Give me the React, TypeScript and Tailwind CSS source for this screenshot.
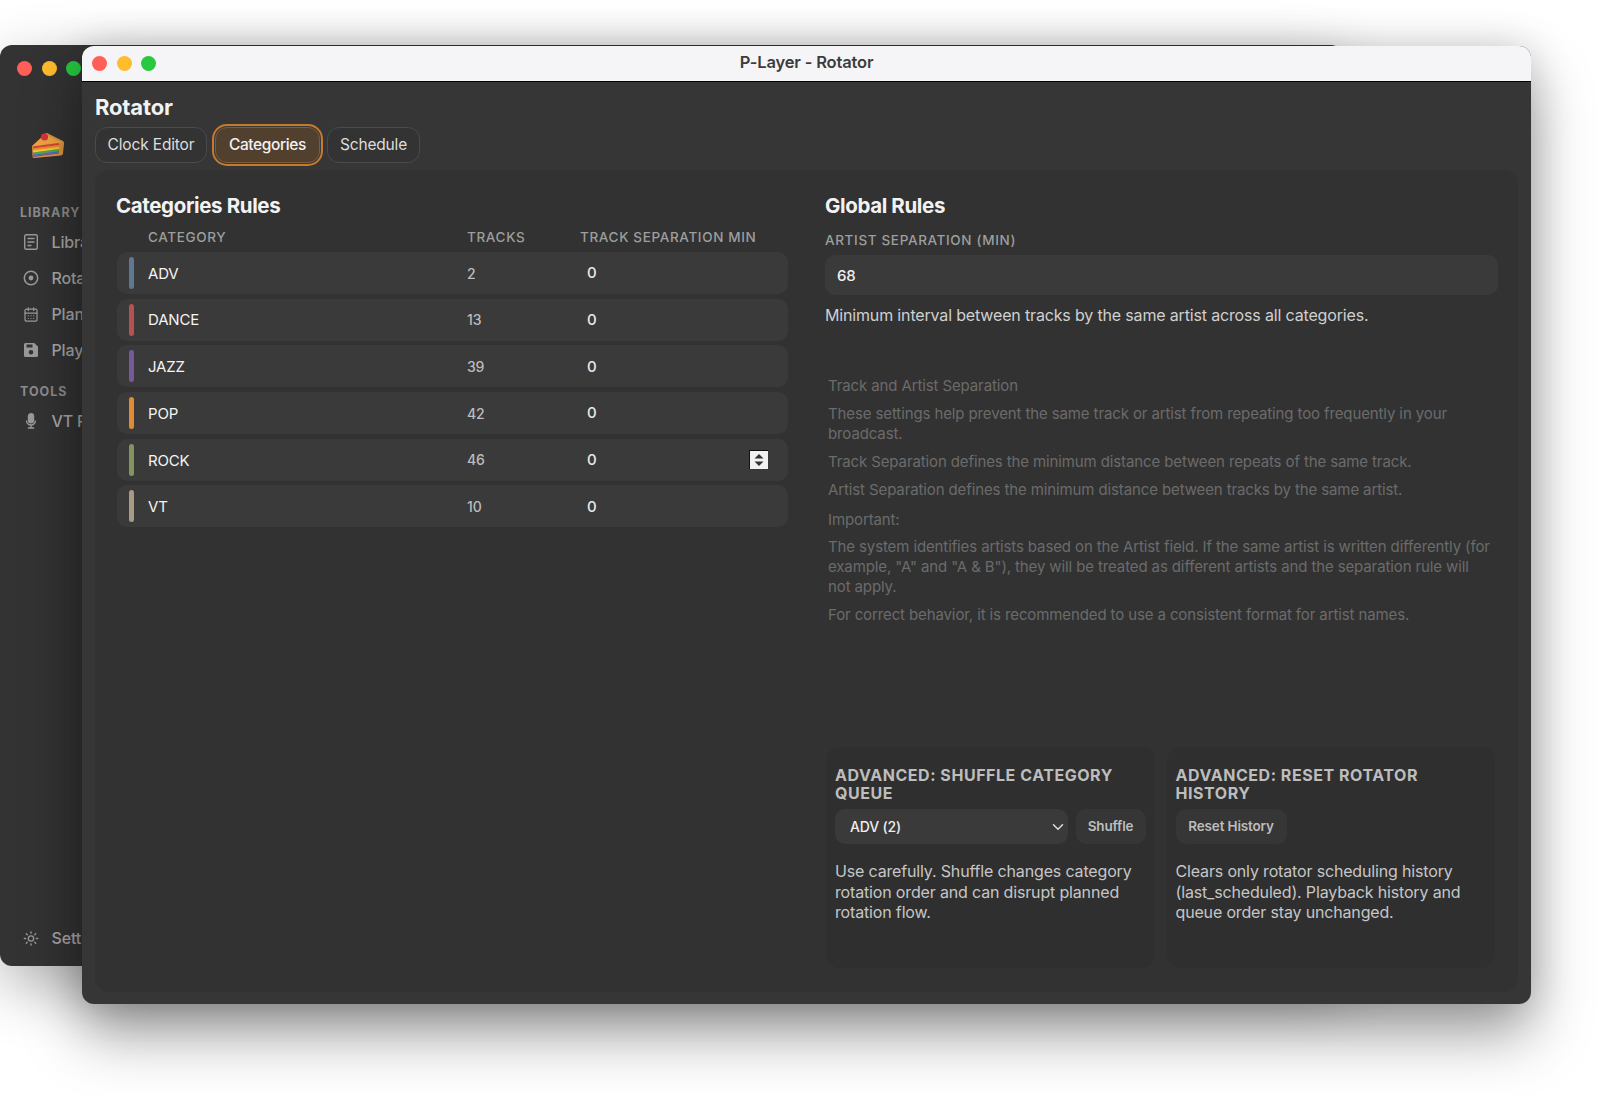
import { CalendarDays, ChevronDown, Sun } from 'lucide-react';

const categories = [
  { name: 'ADV', tracks: 2, color: 'bg-[#5d7890]' },
  { name: 'DANCE', tracks: 13, color: 'bg-[#b5524f]' },
  { name: 'JAZZ', tracks: 39, color: 'bg-[#745a9b]' },
  { name: 'POP', tracks: 42, color: 'bg-[#e08a34]' },
  { name: 'ROCK', tracks: 46, color: 'bg-[#84945f]', stepper: true },
  { name: 'VT', tracks: 10, color: 'bg-[#a89a83]' },
];

function Lights({ className }: { className: string }) {
  return (
    <div className={`flex gap-[9.5px] ${className}`}>
      <span className="h-[15px] w-[15px] rounded-full bg-[#ff5f57]" />
      <span className="h-[15px] w-[15px] rounded-full bg-[#febc2e]" />
      <span className="h-[15px] w-[15px] rounded-full bg-[#28c840]" />
    </div>
  );
}

function Cake() {
  return (
    <svg width="34" height="30" viewBox="0 0 34 30" className="ml-[31px] mt-[53px]">
      <path d="M1 17 L14 5 Q15 3.5 17 4.5 L32 12 Q33.5 13 33 15 L32 24 Q32 26 30 26.5 L3 29 Q1.5 29 1.5 27.5 Z" fill="#dd9340" />
      <path d="M1.5 17 L14 5.5 L31 13.5 Z" fill="#f0a545" />
      <path d="M2 17.5 L28 14 L28 16 L2 19.5 Z" fill="#d8433a" />
      <path d="M2 19.5 L28 16 L28 18 L2 21.5 Z" fill="#ef8f2e" />
      <path d="M2 21.5 L28 18 L28 20 L2 23.5 Z" fill="#f2cf3c" />
      <path d="M2 23.5 L28 20 L28 22 L2 25.5 Z" fill="#58a845" />
      <path d="M2 25.5 L28 22 L28 23.5 L2 27 Z" fill="#3f74c0" />
      <path d="M2 27 L28 23.5 L28 24.5 L2 28 Z" fill="#7b4aa6" />
      <circle cx="13.5" cy="8" r="3.6" fill="#d9333a" />
    </svg>
  );
}

function DocIcon() {
  return (
    <svg width="16" height="16" viewBox="0 0 16 16" fill="none" stroke="currentColor" strokeWidth="1.4">
      <rect x="1.7" y="0.7" width="12.6" height="14.6" rx="1.6" />
      <path d="M4.5 4.5h7M4.5 8h7M4.5 11.5h4" />
    </svg>
  );
}

function TargetIcon() {
  return (
    <svg width="16" height="16" viewBox="0 0 16 16" fill="none" stroke="currentColor" strokeWidth="1.5">
      <circle cx="8" cy="8" r="6.7" />
      <circle cx="8" cy="8" r="2.4" fill="currentColor" stroke="none" />
    </svg>
  );
}

function SaveIcon() {
  return (
    <svg width="16" height="16" viewBox="0 0 16 16" fill="currentColor">
      <path fillRule="evenodd" d="M2.5 1h8.7L15 4.6v8.9A1.5 1.5 0 0 1 13.5 15h-11A1.5 1.5 0 0 1 1 13.500v-11A1.5 1.5 0 0 1 2.500 1ZM3.500 2.500v3h6v-3ZM8 8a2.300 2.300 0 1 0 0 4.600A2.300 2.300 0 0 0 8 8Z" />
    </svg>
  );
}

function MicIcon() {
  return (
    <svg width="16" height="16" viewBox="0 0 16 16" fill="none" stroke="currentColor" strokeWidth="1.4">
      <rect x="5.500" y="0.800" width="5" height="9" rx="2.500" fill="currentColor" />
      <path d="M3.500 7.500a4.500 4.500 0 0 0 9 0M8 12v2.500M4.800 15h6.400" />
    </svg>
  );
}

function NavRow({ icon, label, className }: { icon: React.ReactNode; label: string; className?: string }) {
  return (
    <div className={`flex h-[36px] items-center gap-[12.5px] pl-[23px] text-[16px] font-medium text-[#a8a8a8] ${className ?? ''}`}>
      <span className="flex w-[16px] justify-center text-[#9a9a9a]">{icon}</span>
      <span className="whitespace-nowrap">{label}</span>
    </div>
  );
}

function Stepper() {
  return (
    <div className="ml-auto mr-[20px] flex h-[19px] w-[19px] items-center justify-center border-l border-t border-[#111] bg-[#f2f2f2]">
      <svg width="12" height="14" viewBox="0 0 12 14" fill="#333">
        <path d="M6 1 L10.500 5.500 H1.500 Z" />
        <path d="M6 13 L1.500 8.500 H10.500 Z" />
      </svg>
    </div>
  );
}

function AdvancedCard({ title, children, text }: { title: React.ReactNode; children: React.ReactNode; text: string }) {
  return (
    <div className="h-[221px] rounded-[14px] bg-[#2f2f2f] px-[9px] pt-[19px]">
      <h3 className="text-[16px] font-bold leading-[18px] tracking-[0.034em] text-[#bdbdbd]">{title}</h3>
      <div className="mt-[7px] flex gap-2">{children}</div>
      <p className="mt-[17px] text-[16px] leading-[20.500px] text-[#c6c6c6]">{text}</p>
    </div>
  );
}

export default function App() {
  return (
    <div className="relative h-[1095px] w-[1600px] overflow-hidden bg-white font-['Inter','Liberation_Sans',sans-serif] tracking-[-0.01em]">
      {/* window behind */}
      <div className="absolute left-0 top-[45px] h-[921px] w-[1343px] rounded-[12px] bg-[#333333] shadow-[0_20px_60px_rgba(0,0,0,0.3)]">
        <Lights className="pl-[17px] pt-[16px]" />
        <Cake />
        <div className="mt-[46px] pl-[20px] text-[12.500px] font-bold leading-[16px] tracking-[0.08em] text-[#8c8c8c]">LIBRARY</div>
        <NavRow className="mt-[3px]" icon={<DocIcon />} label="Library" />
        <NavRow icon={<TargetIcon />} label="Rotator" />
        <NavRow icon={<CalendarDays size={17} strokeWidth={1.8} />} label="Planner" />
        <NavRow icon={<SaveIcon />} label="Playlist" />
        <div className="mt-[16px] pl-[20px] text-[12.500px] font-bold leading-[16px] tracking-[0.08em] text-[#8c8c8c]">TOOLS</div>
        <NavRow className="mt-[3px]" icon={<MicIcon />} label="VT Recorder" />
        <NavRow className="mt-[481px]" icon={<Sun size={17} />} label="Settings" />
      </div>

      {/* front window */}
      <div className="absolute left-[82px] top-[46px] flex h-[958px] w-[1449px] flex-col overflow-hidden rounded-[12px] bg-[#363636] shadow-[0_30px_60px_rgba(0,0,0,0.38),0_0_40px_rgba(0,0,0,0.15)]">
        <div className="relative flex h-[36px] flex-none items-center justify-center border-b border-black bg-[#f5f5f7] pb-[2px]">
          <Lights className="absolute left-[10px] top-[10px]" />
          <span className="text-[16.500px] font-semibold text-[#3c3c3c]">P-Layer - Rotator</span>
        </div>

        <div className="flex min-h-0 flex-1 flex-col pl-[13px] pr-[13px] pb-[12px]">
          <h1 className="mt-[11px] text-[22px] font-bold leading-[28px] text-[#f2f2f2]">Rotator</h1>
          <div className="mt-[6px] flex">
            <button className="h-[36px] w-[112px] rounded-[12px] border border-[#4b4b4b] bg-[#333333] text-[15.5px] text-[#dddddd]">Clock Editor</button>
            <button className="ml-[8px] h-[36px] w-[105px] rounded-[12px] border border-[#7a5c3f] bg-[#52402f] text-[15.5px] font-medium tracking-[-0.025em] text-[#f2f2f2] shadow-[0_0_0_1px_#3a3a3a,0_0_0_3px_#c67a2b]">Categories</button>
            <button className="ml-[7px] h-[36px] w-[93px] rounded-[12px] border border-[#4b4b4b] bg-[#333333] text-[15.5px] text-[#dddddd]">Schedule</button>
          </div>

          <div className="mt-[7px] grid min-h-0 flex-1 grid-cols-[671px_673px] gap-x-[37px] rounded-[14px] bg-[#323232] pl-[22px] pr-[20px] pb-[24px] pt-[22px]">
            {/* categories */}
            <div>
              <h2 className="-ml-px text-[20.5px] font-bold leading-[28px] tracking-[-0.018em] text-[#f2f2f2]">Categories Rules</h2>
              <div className="mt-[7px] grid h-[20px] grid-cols-[350px_113px_1fr] items-center pl-[31px] text-[13.500px] font-medium tracking-[0.048em] text-[#9e9e9e]">
                <span className="w-[319px]">CATEGORY</span>
                <span className="-ml-[31px]">TRACKS</span>
                <span className="-ml-[31px]">TRACK SEPARATION MIN</span>
              </div>
              <div className="mt-[5px] flex flex-col gap-[4.700px]">
                {categories.map((c) => (
                  <div key={c.name} className="grid h-[42px] grid-cols-[350px_113px_1fr] items-center rounded-[10px] bg-[#3a3a3a]">
                    <div className="flex items-center pl-[12px]">
                      <span className={`h-[32px] w-[5px] rounded-full ${c.color}`} />
                      <span className="ml-[14px] pt-[2px] text-[15px] text-[#f4f4f4]">{c.name}</span>
                    </div>
                    <span className="text-[14px] font-medium text-[#bcbcbc]">{c.tracks}</span>
                    <div className="flex items-center pl-[7px]">
                      <span className="pt-[1px] text-[15px] font-medium text-[#e8e8e8]">0</span>
                      {c.stepper && <Stepper />}
                    </div>
                  </div>
                ))}
              </div>
            </div>

            {/* global */}
            <div className="flex flex-col">
              <h2 className="text-[20.5px] font-bold leading-[28px] tracking-[-0.018em] text-[#f2f2f2]">Global Rules</h2>
              <label className="mt-[10px] text-[13.500px] font-medium leading-[20px] tracking-[0.048em] text-[#9e9e9e]">ARTIST SEPARATION (MIN)</label>
              <input
                readOnly
                value="68"
                className="mt-[5px] h-[40px] w-full flex-none rounded-[10px] bg-[#3a3a3a] px-[12px] text-[15px] font-medium text-[#f0f0f0] outline-none"
              />
              <p className="mt-[10px] text-[16px] leading-[21px] text-[#d0d0d0]">Minimum interval between tracks by the same artist across all categories.</p>

              <div className="mt-[50px] pl-[3px] pr-[5px] text-[15px] leading-[20px] tracking-[-0.0077em] text-[#6b6b6b]">
                <p>Track and Artist Separation</p>
                <p className="mt-[8px]">These settings help prevent the same track or artist from repeating too frequently in your broadcast.</p>
                <p className="mt-[8px]">Track Separation defines the minimum distance between repeats of the same track.</p>
                <p className="mt-[8px]">Artist Separation defines the minimum distance between tracks by the same artist.</p>
                <p className="mt-[10px]">Important:</p>
                <p className="mt-[7px]">The system identifies artists based on the Artist field. If the same artist is written differently (for example, "A" and "A &amp; B"), they will be treated as different artists and the separation rule will not apply.</p>
                <p className="mt-[8px]">For correct behavior, it is recommended to use a consistent format for artist names.</p>
              </div>

              <div className="mt-auto grid grid-cols-2 gap-x-[12px] pl-[1px] pr-[3px]">
                <AdvancedCard
                  title="ADVANCED: SHUFFLE CATEGORY QUEUE"
                  text="Use carefully. Shuffle changes category rotation order and can disrupt planned rotation flow."
                >
                  <div className="flex h-[35px] w-[233px] items-center justify-between rounded-[10px] bg-[#3a3a3a] pl-[15px] pr-[1px] text-[14px] font-medium text-[#eeeeee]">
                    ADV (2)
                    <ChevronDown size={18} className="text-[#dddddd]" />
                  </div>
                  <button className="h-[35px] w-[70px] rounded-[10px] bg-[#363636] text-[13.500px] font-semibold text-[#bdbdbd]">Shuffle</button>
                </AdvancedCard>
                <AdvancedCard
                  title="ADVANCED: RESET ROTATOR HISTORY"
                  text="Clears only rotator scheduling history (last_scheduled). Playback history and queue order stay unchanged."
                >
                  <button className="h-[35px] w-[111px] rounded-[10px] bg-[#363636] text-[13.500px] font-semibold text-[#bdbdbd]">Reset History</button>
                </AdvancedCard>
              </div>
            </div>
          </div>
        </div>
      </div>
    </div>
  );
}
